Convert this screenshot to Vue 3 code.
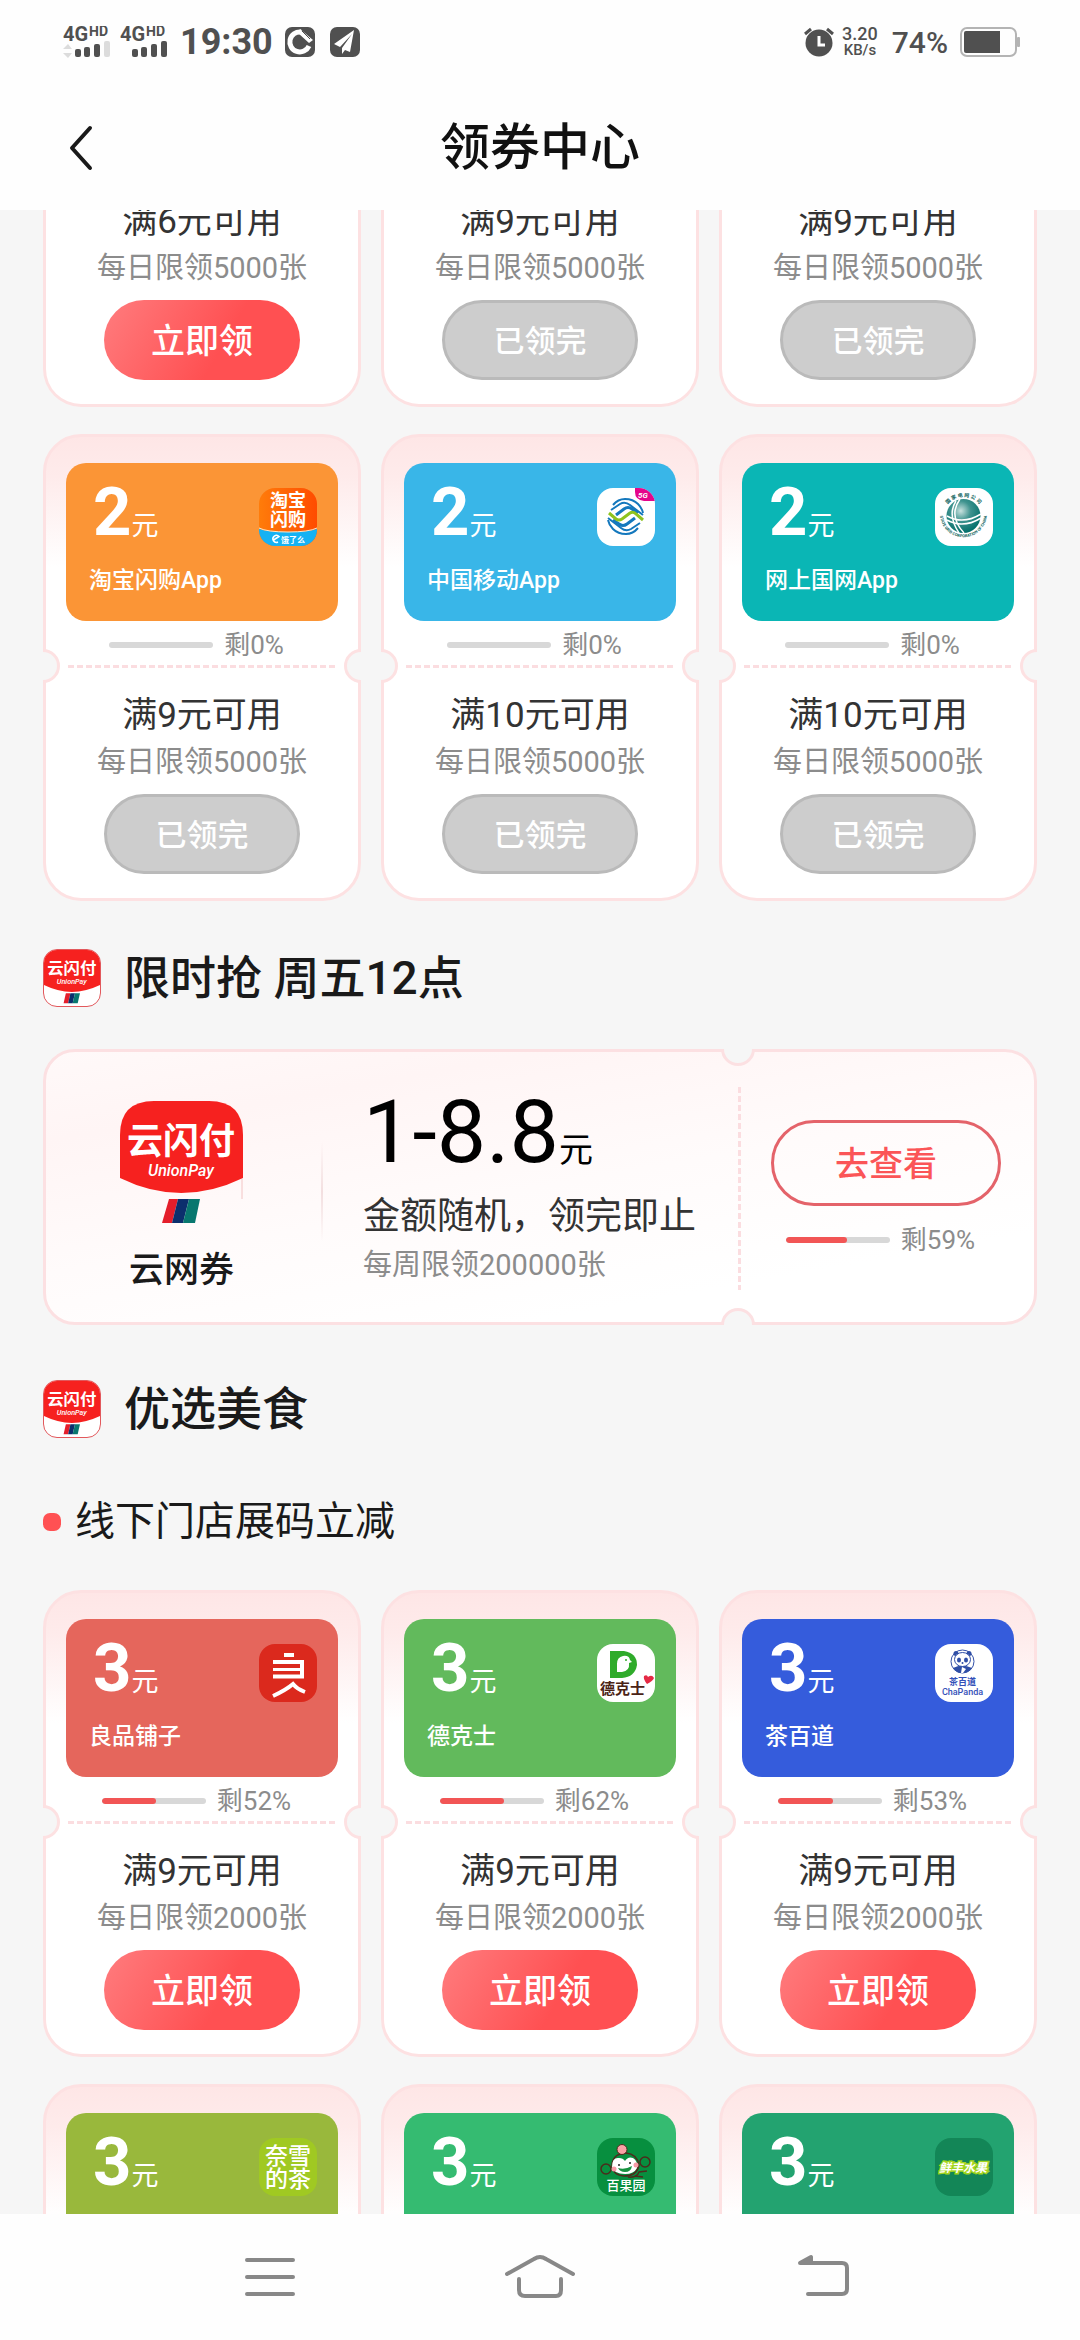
<template>
  <div class="app-container">
    <header class="status-bar">
      <div class="status-left">
        <svg v-for="n in 2" :key="n" width="48" height="32" viewBox="0 0 48 32" fill="#505050">
          <text x="0" y="15" font-size="20" font-weight="700">4G</text>
          <text x="26" y="10" font-size="14" font-weight="700">HD</text>
          <path v-if="n === 1" fill="#dcdcdc" d="M0 23L5 18L9 23ZM0 27H9L5 32Z" />
          <rect x="12" y="23" width="6" height="8" rx="2" />
          <rect x="21" y="21" width="6" height="10" rx="2" />
          <rect x="31" y="18" width="6" height="13" rx="2" />
          <rect x="41" y="15" width="6" height="16" rx="2" :fill="n === 1 ? '#dcdcdc' : '#505050'" />
        </svg>
        <span class="time">19:30</span>
        <svg class="status-icon" viewBox="0 0 30 30">
          <rect width="30" height="30" rx="7" fill="#505050" />
          <path fill="none" stroke="#fff" stroke-width="5" d="M16 5A10 10 0 1 0 24 19" />
          <path fill="#fff" d="M15 2L28 13L24 16L13 6Z" />
          <path fill="#505050" d="M15 9L21 15L15 21L9 15Z" />
          <path stroke="#505050" stroke-width="1" d="M17 4L25 12" />
        </svg>
        <svg class="status-icon" viewBox="0 0 30 30">
          <rect width="30" height="30" rx="7" fill="#505050" />
          <path fill="#fff" d="M24 3L4 17L10 20L22 7L12 21V27L15 23L20 25Z" />
        </svg>
      </div>
      <div class="status-right">
        <svg class="status-icon" viewBox="0 0 30 30">
          <circle cx="15" cy="16" r="13.500" fill="#505050" />
          <path fill="none" stroke="#505050" stroke-width="3" d="M1 7L7 2M23 2L29 7" />
          <path fill="none" stroke="#fff" stroke-width="3" d="M15 9V18H21" />
        </svg>
        <span class="speed"><b>3.20</b><small>KB/s</small></span>
        <span class="percent">74%</span>
        <svg width="60" height="30" viewBox="0 0 60 30">
          <rect x="1" y="1" width="55" height="28" rx="6" fill="none" stroke="#b4b4b4" stroke-width="2" />
          <path fill="#505050" d="M4 6Q4 4 6 4H40V26H6Q4 26 4 24Z" />
          <rect x="57" y="10" width="3" height="10" rx="1" fill="#b4b4b4" />
        </svg>
      </div>
    </header>

    <nav class="title-bar">
      <button class="back" aria-label="返回">
        <svg width="26" height="46" viewBox="0 0 26 46" fill="none" stroke="#1a1a1a" stroke-width="4"
          stroke-linecap="round" stroke-linejoin="round">
          <path d="M22 3L4 23L22 43" />
        </svg>
      </button>
      <h1>领券中心</h1>
    </nav>

    <main class="content">
      <template v-for="(block, i) in blocks" :key="i">
        <h2 v-if="block.type === 'heading'">
          <svg class="heading-logo" viewBox="0 0 123 123">
            <path fill="#f6211f" d="M0 0H123V77Q61 107 0 77Z" />
            <text x="61" y="53" text-anchor="middle" font-size="36" font-weight="700" fill="#fff">云闪付</text>
            <text x="61" y="75" text-anchor="middle" font-size="16" font-weight="500" font-style="italic" fill="#fff">UnionPay</text>
            <path fill="#e41e2b" d="M48 95H58L53 117H43Z" />
            <path fill="#0c2f6d" d="M58 95H68L63 117H53Z" />
            <path fill="#08776f" d="M68 95H79L74 117H63Z" />
          </svg>
          {{ block.text }}
        </h2>

        <h3 v-else-if="block.type === 'sub'">{{ block.text }}</h3>

        <!-- Wide random amount coupon -->
        <section v-else-if="block.type === 'promo'" class="promo">
          <div class="promo-brand">
            <svg class="promo-logo" viewBox="0 0 123 123">
              <path fill="#f6211f" d="M0 34Q0 0 34 0H89Q123 0 123 34V77Q61 107 0 77Z" />
              <path stroke="#f3c4c4" stroke-width="1" d="M122 78V98" />
              <text x="61" y="53" text-anchor="middle" font-size="36" font-weight="700" fill="#fff">云闪付</text>
              <text x="61" y="75" text-anchor="middle" font-size="16" font-weight="500" font-style="italic" fill="#fff">UnionPay</text>
              <path fill="#e41e2b" d="M49 98H58L52 122H42Z" />
              <path fill="#0c2f6d" d="M58 98H69L63 122H52Z" />
              <path fill="#08776f" d="M69 98H80L75 122H63Z" />
            </svg>
            <strong>云网券</strong>
          </div>
          <div class="promo-info">
            <div class="promo-amount">1-8.8<span>元</span></div>
            <p class="promo-desc">金额随机，领完即止</p>
            <p class="limit">每周限领200000张</p>
          </div>
          <div class="promo-action">
            <button class="btn-outline">去查看</button>
            <div class="remain">
              <div class="bar"><div class="bar-fill" :style="{ width: '59%' }"></div></div>
              <span>剩59%</span>
            </div>
          </div>
        </section>

        <!-- Row of three coupons -->
        <div v-else class="coupon-grid" :class="{ scrolled: block.scrolled }">
          <article v-for="(c, j) in block.items" :key="j" class="coupon" :class="{ 'no-banner': !c.color }">
            <div v-if="c.color" class="banner" :style="{ backgroundColor: c.color }">
              <div class="banner-top">
                <div class="amount">{{ c.amount }}<span>元</span></div>

                <svg v-if="c.logo === 'taobao'" class="brand-logo" viewBox="0 0 58 58">
                  <linearGradient id="g-taobao">
                    <stop offset="0" stop-color="#ff7c0a" />
                    <stop offset="1" stop-color="#ff4b00" />
                  </linearGradient>
                  <rect width="58" height="58" fill="url(#g-taobao)" />
                  <path fill="#16b2f3" d="M0 41Q8 44 29 44T58 41V58H0Z" />
                  <path fill="none" stroke="#ffe9c9" stroke-width="1" d="M0 40Q8 44 29 44T58 40" />
                  <text x="29" y="19" text-anchor="middle" font-size="18" font-weight="700" fill="#fff">淘宝</text>
                  <text x="29" y="38" text-anchor="middle" font-size="18" font-weight="700" fill="#fff">闪购</text>
                  <path fill="none" stroke="#fff" stroke-width="1.500" d="M14.500 52L20 48.500A3.500 3.500 0 1 0 19 54" />
                  <text x="22" y="55" font-size="8" font-weight="700" fill="#fff">饿了么</text>
                </svg>

                <svg v-else-if="c.logo === 'mobile'" class="brand-logo" viewBox="0 0 58 58">
                  <rect width="58" height="58" fill="#fff" />
                  <path fill="#e5058b" d="M38 0H58V13H47Q38 12 38 4Z" />
                  <text x="41" y="10" font-size="8" font-weight="700" font-style="italic" fill="#fff">5G</text>
                  <g fill="none" stroke="#1478bd" stroke-width="2">
                    <path d="M16 17Q21 11 28 11Q36 11 41 16Q45 20 46 25" />
                    <path d="M14 22L23 16Q28 13 33 17L46 27" />
                    <path d="M19 27L27 21Q31 18 35 21L41 25" stroke-width="3" />
                    <path d="M41 40Q36 46 29 46Q21 46 16 41Q12 37 11 32" />
                    <path d="M43 35L34 41Q29 44 24 40L11 30" />
                    <path d="M38 30L30 36Q26 39 22 36L16 32" stroke-width="3" />
                  </g>
                  <path fill="none" stroke="#8fc31f" stroke-width="3" d="M12 25L19 31Q22 33 25 31L33 25Q36 23 39 26L46 32" />
                </svg>

                <svg v-else-if="c.logo === 'grid'" class="brand-logo" viewBox="0 0 58 58">
                  <radialGradient id="g-globe" cx="0.42" cy="0.35" r="0.65">
                    <stop offset="0" stop-color="#c9e2df" />
                    <stop offset="0.45" stop-color="#3f938f" />
                    <stop offset="1" stop-color="#04706b" />
                  </radialGradient>
                  <path id="arc-top" fill="none" d="M9 23a20.500 20.500 0 0 1 39 0" />
                  <path id="arc-bottom" fill="none" d="M6 19a23.500 23.500 0 1 0 45 0" />
                  <rect width="58" height="58" fill="#fff" />
                  <circle cx="28.500" cy="28" r="17" fill="url(#g-globe)" />
                  <g fill="none" stroke="#fff" stroke-width="1.500">
                    <path d="M25 11Q13 28 29 45" />
                    <path d="M21 13Q12 27 24 45" />
                    <path d="M12 32Q28 41 46 30" />
                    <path d="M12 28Q28 37 46 26" />
                  </g>
                  <text font-size="5" font-weight="700" fill="#0b5f5b">
                    <textPath href="#arc-top" startOffset="50%" text-anchor="middle">国 家 电 网 公 司</textPath>
                  </text>
                  <text font-size="4" font-weight="700" fill="#0b5f5b">
                    <textPath href="#arc-bottom" startOffset="50%" text-anchor="middle">STATE GRID CORPORATION OF CHINA</textPath>
                  </text>
                </svg>

                <svg v-else-if="c.logo === 'liangpin'" class="brand-logo" viewBox="0 0 58 58">
                  <rect width="58" height="58" fill="#db291d" />
                  <g fill="none" stroke="#fff" stroke-width="4">
                    <path d="M25 11H35" />
                    <path d="M14 18H43V34" />
                    <path d="M14 25.500H41" stroke-width="3" />
                    <path d="M14 32.500H45" />
                    <path d="M14 52Q27 46 34 40Q38 45 46 48" />
                  </g>
                </svg>

                <svg v-else-if="c.logo === 'dicos'" class="brand-logo" viewBox="0 0 58 58">
                  <rect width="58" height="58" fill="#fff" />
                  <path fill="#2fab2a" d="M13 7H27Q40 9 40 21Q38 33 25 34H13Z" />
                  <path fill="#fff" d="M20 28V20Q20 13 26 12Q32 11 33 16L35 18L32 19Q33 27 25 28Z" />
                  <circle cx="29" cy="16" r="1" fill="#2fab2a" />
                  <path fill="#e52a45" d="M50 40Q46 35 47 32Q50 30 51 33Q55 30 57 34Q56 37 50 40Z" />
                  <text x="3" y="50" font-size="15" font-weight="700" fill="#4a2315">德克士</text>
                </svg>

                <svg v-else-if="c.logo === 'chapanda'" class="brand-logo" viewBox="0 0 58 58">
                  <rect width="58" height="58" fill="#fff" />
                  <circle cx="27.500" cy="17.500" r="11.500" fill="#fff" stroke="#3350a8" stroke-width="1" />
                  <path fill="#2f4ea6" d="M18 24Q27 19 37 24Q34 29 27 29Q21 29 18 24Z" />
                  <circle cx="21" cy="9.500" r="2.500" fill="#2f4ea6" />
                  <circle cx="34" cy="9.500" r="2.500" fill="#2f4ea6" />
                  <ellipse cx="27.500" cy="15.500" rx="8" ry="7" fill="#fff" stroke="#2f4ea6" stroke-width="1" />
                  <ellipse cx="24" cy="16" rx="2" ry="2.500" fill="#2f4ea6" />
                  <ellipse cx="31" cy="16" rx="2" ry="2.500" fill="#2f4ea6" />
                  <circle cx="27.500" cy="19" r="1" fill="#2f4ea6" />
                  <path fill="#fff" d="M27 23L31 25L28 29H26Z" />
                  <text x="27.500" y="41" text-anchor="middle" font-size="9" font-weight="700" fill="#3350b8">茶百道</text>
                  <text x="27.500" y="51" text-anchor="middle" font-size="9" font-weight="500" fill="#3350b8">ChaPanda</text>
                </svg>

                <svg v-else-if="c.logo === 'naixue'" class="brand-logo" viewBox="0 0 58 58">
                  <rect width="58" height="58" fill="#a0c922" />
                  <text x="29" y="26" text-anchor="middle" font-size="23" font-weight="500" fill="#fff">奈雪</text>
                  <text x="29" y="49" text-anchor="middle" font-size="23" font-weight="500" fill="#fff">的茶</text>
                </svg>

                <svg v-else-if="c.logo === 'baiguo'" class="brand-logo" viewBox="0 0 58 58">
                  <rect width="58" height="58" fill="#078f3f" />
                  <g fill="none" stroke="#4c2c1c" stroke-width="1.500">
                    <circle cx="9" cy="31" r="5" />
                    <circle cx="48" cy="24" r="5" />
                    <path d="M15 26Q17 15 29 15Q40 16 42 27Q40 38 27 38Q15 37 15 26" />
                    <path d="M31 39Q40 40 42 34L50 33M38 38L46 39" />
                  </g>
                  <path fill="#fff" d="M15 29Q15 19 22 20Q26 20 28 23Q31 18 36 20Q41 23 40 30Q37 36 28 36Q17 36 15 29Z" />
                  <circle cx="25" cy="11.500" r="5" fill="#f8a2a6" stroke="#4c2c1c" stroke-width="1" />
                  <circle cx="17" cy="31" r="2.500" fill="#f79aa6" />
                  <circle cx="39" cy="27" r="2.500" fill="#f79aa6" />
                  <circle cx="22" cy="27" r="1" fill="#222" />
                  <circle cx="33" cy="25" r="1" fill="#222" />
                  <path fill="#16923f" d="M21 30Q28 32 35 28Q34 34 28 34Q23 34 21 30Z" />
                  <text x="29" y="52" text-anchor="middle" font-size="13" font-weight="500" fill="#fff">百果园</text>
                </svg>

                <svg v-else class="brand-logo" viewBox="0 0 58 58">
                  <rect width="58" height="58" fill="#138657" />
                  <text x="28" y="34" text-anchor="middle" font-size="12" font-weight="700" font-style="italic" fill="#fff"
                    stroke="#a2d51c" stroke-width="3" paint-order="stroke">鲜丰水果</text>
                </svg>
              </div>
              <p v-if="c.name" class="brand-name">{{ c.name }}</p>
            </div>
            <div v-if="c.remain !== undefined" class="remain">
              <div class="bar"><div class="bar-fill" :style="{ width: c.remain + '%' }"></div></div>
              <span>剩{{ c.remain }}%</span>
            </div>
            <div v-if="c.remain !== undefined" class="tear"></div>
            <div v-if="c.min" class="coupon-body">
              <p class="condition">满{{ c.min }}元可用</p>
              <p class="limit">每日限领{{ c.limit }}张</p>
              <button class="btn" :disabled="c.soldOut">{{ c.soldOut ? '已领完' : '立即领' }}</button>
            </div>
          </article>
        </div>
      </template>
    </main>

    <footer class="system-nav">
      <button aria-label="菜单">
        <svg width="80" height="50" viewBox="0 0 80 50">
          <path d="M17 8H63M17 25H63M17 42H63" />
        </svg>
      </button>
      <button aria-label="主页">
        <svg width="80" height="50" viewBox="0 0 80 50">
          <path d="M7 22L34 7Q40 3 46 7L73 22M19 27V38Q19 44 25 44H56Q61 44 61 38V27" />
        </svg>
      </button>
      <button aria-label="返回上一页">
        <svg width="80" height="50" viewBox="0 0 80 50">
          <path d="M32 11H72Q77 11 77 16V37Q77 42 72 42H38" />
          <path class="arrow" d="M30 11L41 5V11Z" />
        </svg>
      </button>
    </footer>
  </div>
</template>

<script setup>
import { ref } from 'vue'

// Everything on the page, from top to bottom
const blocks = ref([
  {
    type: 'coupons',
    scrolled: true,
    items: [
      { min: 6, limit: 5000, soldOut: false },
      { min: 9, limit: 5000, soldOut: true },
      { min: 9, limit: 5000, soldOut: true }
    ]
  },
  {
    type: 'coupons',
    items: [
      { amount: 2, name: '淘宝闪购App', logo: 'taobao', color: '#fb9536', remain: 0, min: 9, limit: 5000, soldOut: true },
      { amount: 2, name: '中国移动App', logo: 'mobile', color: '#39b6e8', remain: 0, min: 10, limit: 5000, soldOut: true },
      { amount: 2, name: '网上国网App', logo: 'grid', color: '#0ab6b5', remain: 0, min: 10, limit: 5000, soldOut: true }
    ]
  },
  { type: 'heading', text: '限时抢 周五12点' },
  { type: 'promo' },
  { type: 'heading', text: '优选美食' },
  { type: 'sub', text: '线下门店展码立减' },
  {
    type: 'coupons',
    items: [
      { amount: 3, name: '良品铺子', logo: 'liangpin', color: '#e5665c', remain: 52, min: 9, limit: 2000, soldOut: false },
      { amount: 3, name: '德克士', logo: 'dicos', color: '#62ba5c', remain: 62, min: 9, limit: 2000, soldOut: false },
      { amount: 3, name: '茶百道', logo: 'chapanda', color: '#355cdc', remain: 53, min: 9, limit: 2000, soldOut: false }
    ]
  },
  {
    type: 'coupons',
    items: [
      { amount: 3, logo: 'naixue', color: '#99b83c' },
      { amount: 3, logo: 'baiguo', color: '#35bb71' },
      { amount: 3, logo: 'xianfeng', color: '#23a370' }
    ]
  }
])
</script>

<style>
body {
  background-color: #f6f6f6;
}
</style>

<style scoped>
.app-container {
  display: flex;
  flex-direction: column;
  height: 100vh;
  overflow: hidden;
  background-color: #f6f6f6;
  color: #1a1a1a;
  font-family: Roboto, 'Noto Sans CJK SC', sans-serif;
}

h1,
h2,
h3,
p {
  margin: 0;
  font-weight: 400;
}

button {
  padding: 0;
  border: none;
  background: none;
  font-family: inherit;
  cursor: pointer;
}

svg {
  display: block;
  flex-shrink: 0;
}

/* Status bar */
.status-bar {
  display: flex;
  justify-content: space-between;
  align-items: center;
  height: 84px;
  padding: 0 60px 0 63px;
  background-color: #fefefe;
  color: #505050;
  font-weight: 500;
}

.status-left,
.status-right {
  display: flex;
  align-items: center;
}

.status-left {
  gap: 9px;
}

.status-right {
  gap: 8px;
}

.status-icon {
  width: 30px;
  height: 30px;
}

.status-left .status-icon + .status-icon {
  margin-left: 6px;
}

.time {
  padding: 0 3px;
  font-size: 36px;
  font-weight: 700;
}

.speed {
  display: flex;
  flex-direction: column;
  align-items: center;
  font-size: 18px;
  line-height: 16px;
}

.speed b {
  font-weight: 500;
}

.speed small {
  font-size: 15px;
}

.percent {
  padding: 0 4px 0 6px;
  font-size: 30px;
}

/* Title bar */
.title-bar {
  display: grid;
  grid-template-columns: 1fr auto 1fr;
  align-items: center;
  box-sizing: border-box;
  height: 126px;
  padding: 2px 68px 0;
  background-color: #fefefe;
}

.back {
  justify-self: start;
}

h1 {
  color: #111;
  font-size: 50px;
  font-weight: 500;
  line-height: 72px;
}

/* Scrolling area */
.content {
  flex: 1;
  min-height: 0;
  padding: 0 43px;
  overflow: hidden;
}

h2 {
  display: flex;
  align-items: center;
  gap: 23px;
  margin: 44px 0 38px;
  font-size: 46px;
  font-weight: 500;
  line-height: 66px;
}

.heading-logo {
  box-sizing: border-box;
  width: 58px;
  height: 58px;
  border: 1px solid #e2585c;
  border-radius: 14px;
  background-color: #fff;
}

h3 {
  display: flex;
  align-items: center;
  gap: 14px;
  margin: 50px 0 38px;
  font-size: 40px;
  line-height: 60px;
}

h3::before {
  content: '';
  width: 18px;
  height: 18px;
  border-radius: 7px;
  background-color: #ff5153;
}

/* Coupons */
.coupon-grid {
  display: grid;
  grid-template-columns: repeat(3, 1fr);
  gap: 20px;
}

.coupon-grid + .coupon-grid {
  margin-top: 27px;
}

.coupon-grid.scrolled {
  margin-top: -11px;
}

.coupon {
  padding: 26px 20px 24px;
  border: 3px solid #fde1e2;
  border-radius: 38px;
  background: linear-gradient(#fee6e6, #feebeb 40px, #fff 130px) #fff;
}

.coupon.no-banner {
  padding-top: 0;
  border-top: none;
  border-radius: 0 0 38px 38px;
  background: #fff;
}

.banner {
  box-sizing: border-box;
  min-height: 158px;
  padding: 25px 21px 0 23px;
  border-radius: 20px;
  color: #fff;
}

.banner-top {
  display: flex;
  justify-content: space-between;
  align-items: flex-start;
}

.amount {
  padding-left: 4px;
  font-size: 67px;
  font-weight: 700;
  line-height: 48px;
}

.amount span {
  font-size: 27px;
  font-weight: 400;
  line-height: 1;
}

.brand-logo {
  width: 58px;
  height: 58px;
  border-radius: 16px;
}

.brand-name {
  margin-top: 18px;
  font-size: 23px;
  font-weight: 500;
  line-height: 34px;
}

.remain {
  display: flex;
  justify-content: center;
  align-items: center;
  margin-top: 4px;
  color: #8c8c8c;
  font-size: 26px;
  line-height: 40px;
}

.remain span {
  padding: 0 11px;
}

.bar {
  width: 104px;
  height: 6px;
  border-radius: 3px;
  background-color: #d8d8d8;
  overflow: hidden;
}

.bar-fill {
  height: 100%;
  border-radius: 3px;
  background-color: #f25555;
}

/* Dashed line with a notch on both sides of the card */
.tear {
  position: relative;
  height: 3px;
  margin: 0 2px;
  background: repeating-linear-gradient(90deg, #fbdde0 0 6px, transparent 6px 9px);
}

.tear::before,
.tear::after {
  content: '';
  position: absolute;
  top: -16px;
  box-sizing: border-box;
  width: 34px;
  height: 34px;
  border: 3px solid #fde1e2;
  border-radius: 50%;
  background-color: #f6f6f6;
}

.tear::before {
  left: -42px;
  clip-path: inset(0 0 0 17px);
}

.tear::after {
  right: -42px;
  clip-path: inset(0 17px 0 0);
}

.coupon-body {
  display: flex;
  flex-direction: column;
  align-items: center;
  margin-top: 25px;
}

.no-banner .coupon-body {
  margin-top: 0;
}

.condition {
  color: #333;
  font-size: 35px;
  line-height: 46px;
}

.limit {
  color: #8c8c8c;
  font-size: 29px;
  line-height: 46px;
}

.btn {
  box-sizing: border-box;
  width: 196px;
  height: 80px;
  margin-top: 9px;
  padding-bottom: 3px;
  border-radius: 40px;
  background: linear-gradient(120deg, #ff7c7e, #ff5052 60%);
  color: #fff;
  font-size: 34px;
  font-weight: 500;
}

.btn:disabled {
  border: 3px solid #bababa;
  background: #cdcdcd;
  font-size: 31px;
  cursor: default;
}

/* Wide coupon */
.promo {
  display: grid;
  grid-template-columns: 277fr 415fr 296fr;
  box-sizing: border-box;
  min-height: 276px;
  border: 3px solid #fce0e2;
  border-radius: 32px;
  background: linear-gradient(170deg, #fff9f9, #fff5f5 20%, #fffbfb 50%, #fff 80%);
}

.promo + h2 {
  margin: 51px 0 0;
}

.promo-brand {
  display: flex;
  flex-direction: column;
  align-items: center;
  gap: 24px;
  padding: 49px 6px 0 0;
  background: linear-gradient(transparent 90px, #f3dfe0 140px, transparent 190px) right / 2px 100% no-repeat;
}

.promo-logo {
  width: 123px;
  height: 123px;
}

.promo-brand strong {
  font-size: 35px;
  font-weight: 500;
  line-height: 46px;
}

.promo-info {
  padding: 40px 0 0 40px;
  white-space: nowrap;
}

.promo-amount {
  color: #000;
  font-size: 88px;
  line-height: 80px;
}

.promo-amount span {
  font-size: 34px;
  line-height: 1;
}

.promo-desc {
  margin: 22px 0 2px;
  color: #333;
  font-size: 37px;
  line-height: 46px;
}

.promo-action {
  position: relative;
  display: flex;
  flex-direction: column;
  align-items: center;
  padding-top: 68px;
  background: repeating-linear-gradient(#fbdde0 0 6px, transparent 6px 9px) 0 35px / 3px 203px no-repeat;
}

.promo-action::before,
.promo-action::after {
  content: '';
  position: absolute;
  left: -17px;
  box-sizing: border-box;
  width: 34px;
  height: 34px;
  border: 3px solid #fce0e2;
  border-radius: 50%;
  background-color: #f6f6f6;
}

.promo-action::before {
  top: -20px;
  clip-path: inset(17px 0 0 0);
}

.promo-action::after {
  bottom: -20px;
  clip-path: inset(0 0 17px 0);
}

.btn-outline {
  box-sizing: border-box;
  width: 230px;
  height: 86px;
  padding-bottom: 3px;
  border: 3px solid #e4636a;
  border-radius: 43px;
  color: #fb5557;
  font-size: 34px;
  font-weight: 500;
}

.promo .remain {
  margin-top: 14px;
}

/* System navigation */
.system-nav {
  display: flex;
  justify-content: space-between;
  align-items: center;
  height: 126px;
  padding: 0 230px;
  background-color: #fefefe;
}

.system-nav path {
  fill: none;
  stroke: #888;
  stroke-width: 4;
  stroke-linecap: round;
  stroke-linejoin: round;
}

.system-nav .arrow {
  fill: #888;
}
</style>
